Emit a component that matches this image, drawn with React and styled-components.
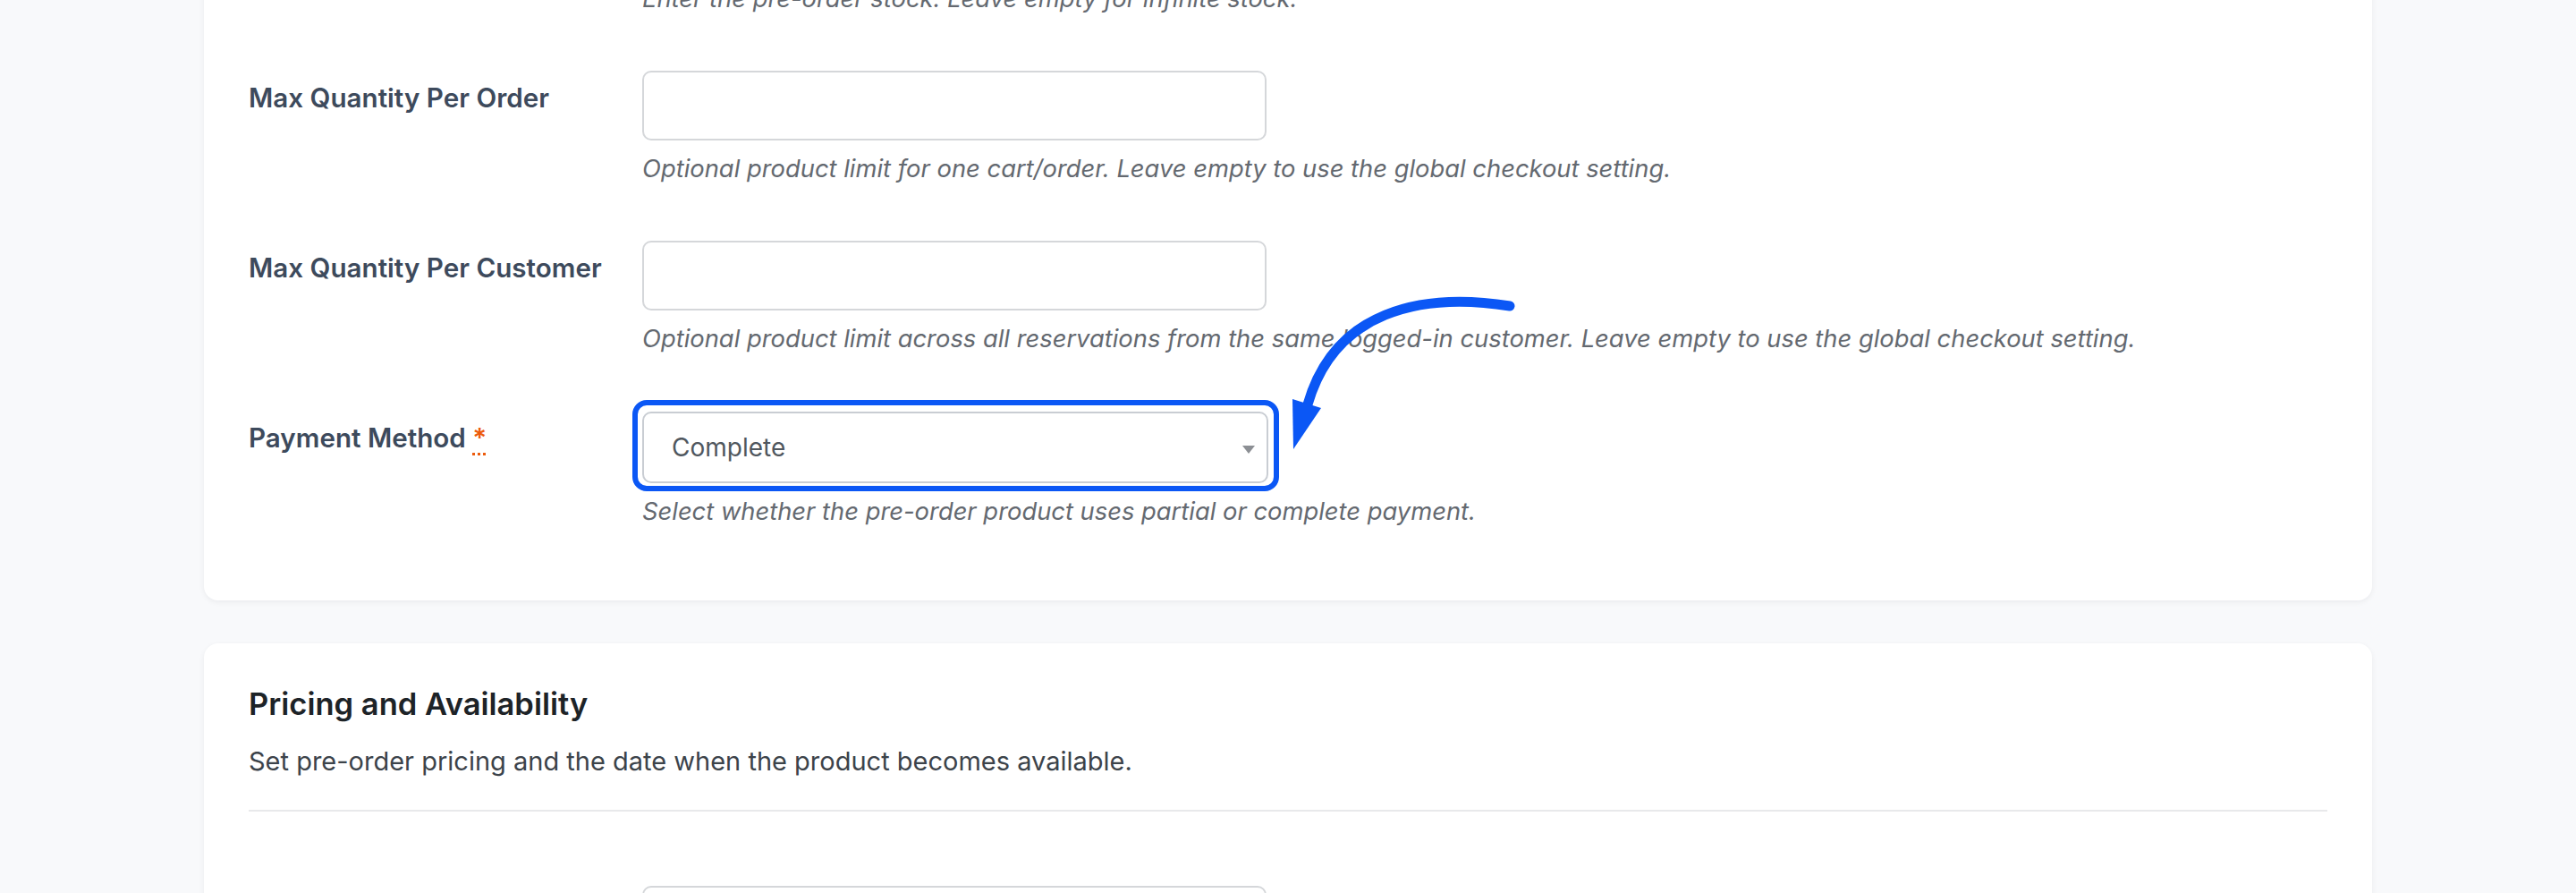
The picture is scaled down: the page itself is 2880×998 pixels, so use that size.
import styled, { createGlobalStyle } from "styled-components";

const GlobalStyle = createGlobalStyle`
  * { box-sizing: border-box; }
  html, body {
    margin: 0;
    background: #f8f9fb;
    font-family: Inter, "Noto Sans", "Liberation Sans", sans-serif;
    overflow: hidden;
  }
`;

const limitRows = [
  {
    label: "Pre-order Stock",
    help: "Enter the pre-order stock. Leave empty for infinite stock.",
  },
  {
    label: "Max Quantity Per Order",
    help: "Optional product limit for one cart/order. Leave empty to use the global checkout setting.",
  },
  {
    label: "Max Quantity Per Customer",
    help: "Optional product limit across all reservations from the same logged-in customer. Leave empty to use the global checkout setting.",
  },
];

export default function App() {
  return (
    <Page>
      <GlobalStyle />
      <Card $top={-157}>
        {limitRows.map((row) => (
          <Row key={row.label}>
            <Label>{row.label}</Label>
            <Field>
              <TextInput type="text" />
              <Help>{row.help}</Help>
            </Field>
          </Row>
        ))}

        <Row>
          <Label>
            Payment Method <Required title="required">*</Required>
          </Label>
          <Field>
            <SelectWrap>
              <Select defaultValue="complete">
                <option value="partial">Partial</option>
                <option value="complete">Complete</option>
              </Select>
              <Caret />
              <Highlight />
              <Arrow width="300" height="220" viewBox="0 0 300 220">
                <path
                  d="M270 22 C 170 6, 74 28, 44 132"
                  fill="none"
                  stroke="#0b57f5"
                  strokeWidth="11"
                  strokeLinecap="round"
                />
                <polygon points="28,182 27,126 59,136" fill="#0b57f5" />
              </Arrow>
            </SelectWrap>
            <Help>Select whether the pre-order product uses partial or complete payment.</Help>
          </Field>
        </Row>
      </Card>

      <Card>
        <SectionTitle>Pricing and Availability</SectionTitle>
        <SectionText>Set pre-order pricing and the date when the product becomes available.</SectionText>
        <Divider />
        <Row>
          <Label>Pre-order Price</Label>
          <Field>
            <TextInput type="text" />
          </Field>
        </Row>
      </Card>
    </Page>
  );
}

const Page = styled.div`
  width: 2424px;
  margin: 0 auto;
  display: flex;
  flex-direction: column;
  gap: 48px;
`;

const Card = styled.section`
  margin-top: ${(p) => (p.$top ? `${p.$top}px` : "0")};
  background: #fff;
  border-radius: 16px;
  box-shadow: 0 2px 6px rgba(16, 24, 40, 0.06);
  padding: 46px 50px 79px;
  display: flex;
  flex-direction: column;
  gap: 60px;
`;

const Row = styled.div`
  display: grid;
  grid-template-columns: 440px 698px;
  align-items: start;
`;

const Label = styled.label`
  padding-top: 10px;
  font-size: 29.6px;
  line-height: 40px;
  font-weight: 600;
  color: #3d4a5c;
`;

const Required = styled.abbr`
  color: #ec5b0c;
  text-decoration: underline dotted;
  text-underline-offset: 6px;
  cursor: help;
`;

const Field = styled.div`
  display: flex;
  flex-direction: column;
  gap: 12px;
`;

const TextInput = styled.input`
  width: 698px;
  height: 78px;
  border: 2px solid #d5d7da;
  border-radius: 10px;
  background: #fff;
  font: inherit;
  font-size: 28px;
  padding: 0 31px;
  outline: none;
`;

const SelectWrap = styled.div`
  position: relative;
  width: 700px;
  height: 80px;
  margin-top: 1px;
`;

const Select = styled.select`
  appearance: none;
  width: 100%;
  height: 100%;
  border: 2px solid #c9cdd3;
  border-radius: 10px;
  background: #fff;
  font-family: Inter, "Noto Sans", "Liberation Sans", sans-serif;
  font-size: 28px;
  color: #50575e;
  padding: 0 31px;
  outline: none;
`;

const Caret = styled.span`
  position: absolute;
  right: 15px;
  top: 38px;
  width: 0;
  height: 0;
  border-left: 7px solid transparent;
  border-right: 7px solid transparent;
  border-top: 9px solid #8c8f94;
  pointer-events: none;
`;

const Highlight = styled.span`
  position: absolute;
  inset: -13px -12px -9px -11px;
  border: 6px solid #0b57f5;
  border-radius: 16px;
  pointer-events: none;
`;

const Arrow = styled.svg`
  position: absolute;
  left: 700px;
  top: -140px;
  overflow: visible;
  pointer-events: none;
`;

const Help = styled.p`
  margin: 0;
  font-size: 27.35px;
  line-height: 40px;
  font-style: italic;
  color: #646970;
  white-space: nowrap;
`;

const SectionTitle = styled.h2`
  margin: 0;
  font-size: 34.5px;
  line-height: 44px;
  font-weight: 600;
  color: #1d2327;
`;

const SectionText = styled.p`
  margin: -38px 0 0;
  font-size: 29px;
  line-height: 40px;
  color: #3c434a;
`;

const Divider = styled.hr`
  margin: -26px 0 23px;
  border: none;
  border-top: 2px solid #e8e9eb;
`;
